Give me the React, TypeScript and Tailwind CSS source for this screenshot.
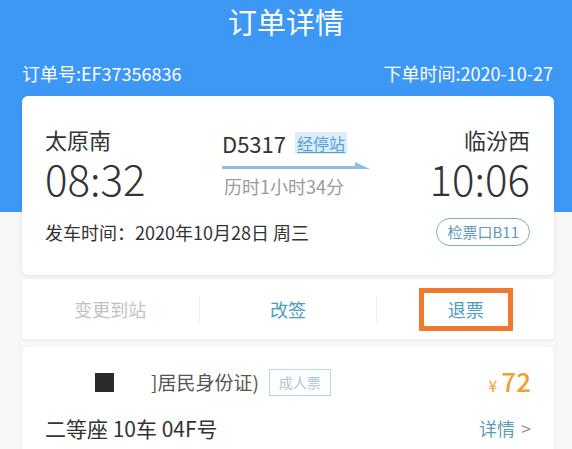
import React from "react";

const font = { fontFamily: '"Noto Sans CJK SC", "Noto Sans", sans-serif' };

export default function App() {
  return (
    <div
      style={font}
      className="w-[572px] h-[449px] overflow-hidden bg-[linear-gradient(to_bottom,#3d97f4_212px,#f7f7f7_212px)]"
    >
      {/* Title */}
      <div className="h-[42px] flex items-center justify-center text-white text-[29px] leading-[42px]">
        订单详情
      </div>
      {/* Order row */}
      <div className="mt-[19px] pl-[22px] pr-[19px] flex justify-between text-white text-[18px] leading-[24px]">
        <span>订单号:EF37356836</span>
        <span>下单时间:2020-10-27</span>
      </div>

      {/* Main card */}
      <div className="mt-[11px] ml-[22px] mr-[18px] h-[179px] bg-white rounded-[6px] shadow-[0_1px_4px_rgba(0,0,0,0.08)] pl-[23px] pr-[24px] pt-[30px]">
        <div className="flex">
          <div className="w-[177px]">
            <div className="text-[22px] leading-[26px] text-[#333]">太原南</div>
            <div className="text-[42px] leading-[48px] text-[#333] mt-[2px] font-light">08:32</div>
          </div>
          <div className="w-[150px] pt-[4px]">
            <div className="flex items-center">
              <span className="text-[22px] leading-[26px] text-[#333]">D5317</span>
              <span className="ml-[9px] px-[2px] bg-[#dcedf8] text-[#55a2d2] text-[16px] leading-[22px] underline underline-offset-2">
                经停站
              </span>
            </div>
            <div className="relative mt-[6px] h-[8px]">
              <svg width="150" height="8" viewBox="0 0 150 8" className="block">
                <rect x="0" y="4" width="134" height="3" fill="#93bbe2" />
                <polygon points="133,0 133,7 148,7" fill="#8dbde9" />
              </svg>
            </div>
            <div className="mt-[4px] ml-[2px] text-[18px] leading-[24px] text-[#9a9a9a]">历时1小时34分</div>
          </div>
          <div className="flex-1 text-right">
            <div className="text-[22px] leading-[26px] text-[#333]">临汾西</div>
            <div className="text-[42px] leading-[48px] text-[#333] mt-[2px] font-light">10:06</div>
          </div>
        </div>
        <div className="mt-[16px] flex items-center justify-between">
          <span className="text-[18px] leading-[26px] text-[#333]">发车时间：2020年10月28日 周三</span>
          <span className="h-[28px] px-[10px] flex items-center rounded-full border border-[#7fabbf] text-[15px] text-[#5f9bb6]">
            检票口B11
          </span>
        </div>
      </div>

      {/* Actions card */}
      <div className="mt-[4px] ml-[22px] mr-[18px] h-[60px] bg-white rounded-[4px] shadow-[0_1px_4px_rgba(0,0,0,0.06)] flex items-center">
        <div className="flex-1 flex justify-center text-[18px] text-[#c2c2c2]">变更到站</div>
        <div className="w-px h-[26px] bg-[#ececec]" />
        <div className="flex-1 flex justify-center text-[18px] text-[#4e9cb9]">改签</div>
        <div className="w-px h-[26px] bg-[#ececec]" />
        <div className="flex-1 flex justify-center">
          <div className="w-[94px] h-[43px] border-[5px] border-[#ef7a2f] flex items-center justify-center text-[18px] text-[#4e9cb9]">
            退票
          </div>
        </div>
      </div>

      {/* Passenger card */}
      <div className="mt-[8px] ml-[22px] mr-[18px] h-[120px] bg-white rounded-[4px] shadow-[0_1px_4px_rgba(0,0,0,0.06)] pt-[21px] pl-[23px] pr-[23px]">
        <div className="flex items-center h-[28px]">
          <div className="ml-[50px] w-[19px] h-[19px] bg-[#2b2b2b]" />
          <span className="ml-[37px] text-[19px] text-[#555]">]居民身份证)</span>
          <span className="ml-[10px] h-[27px] px-[9px] flex items-center border border-[#b9d8e3] text-[14px] text-[#a5c9d6]">
            成人票
          </span>
          <span className="ml-auto text-[#f0a134] flex items-baseline">
            <span className="text-[16px] mr-[4px]">¥</span>
            <span className="text-[26px] leading-[28px] font-medium">72</span>
          </span>
        </div>
        <div className="mt-[18px] flex items-center justify-between">
          <span className="text-[21px] leading-[28px] text-[#333]">二等座 10车 04F号</span>
          <span className="text-[18px] text-[#5c9bb6] flex items-center">
            详情
            <span className="ml-[6px] text-[#999]">&gt;</span>
          </span>
        </div>
      </div>
    </div>
  );
}
